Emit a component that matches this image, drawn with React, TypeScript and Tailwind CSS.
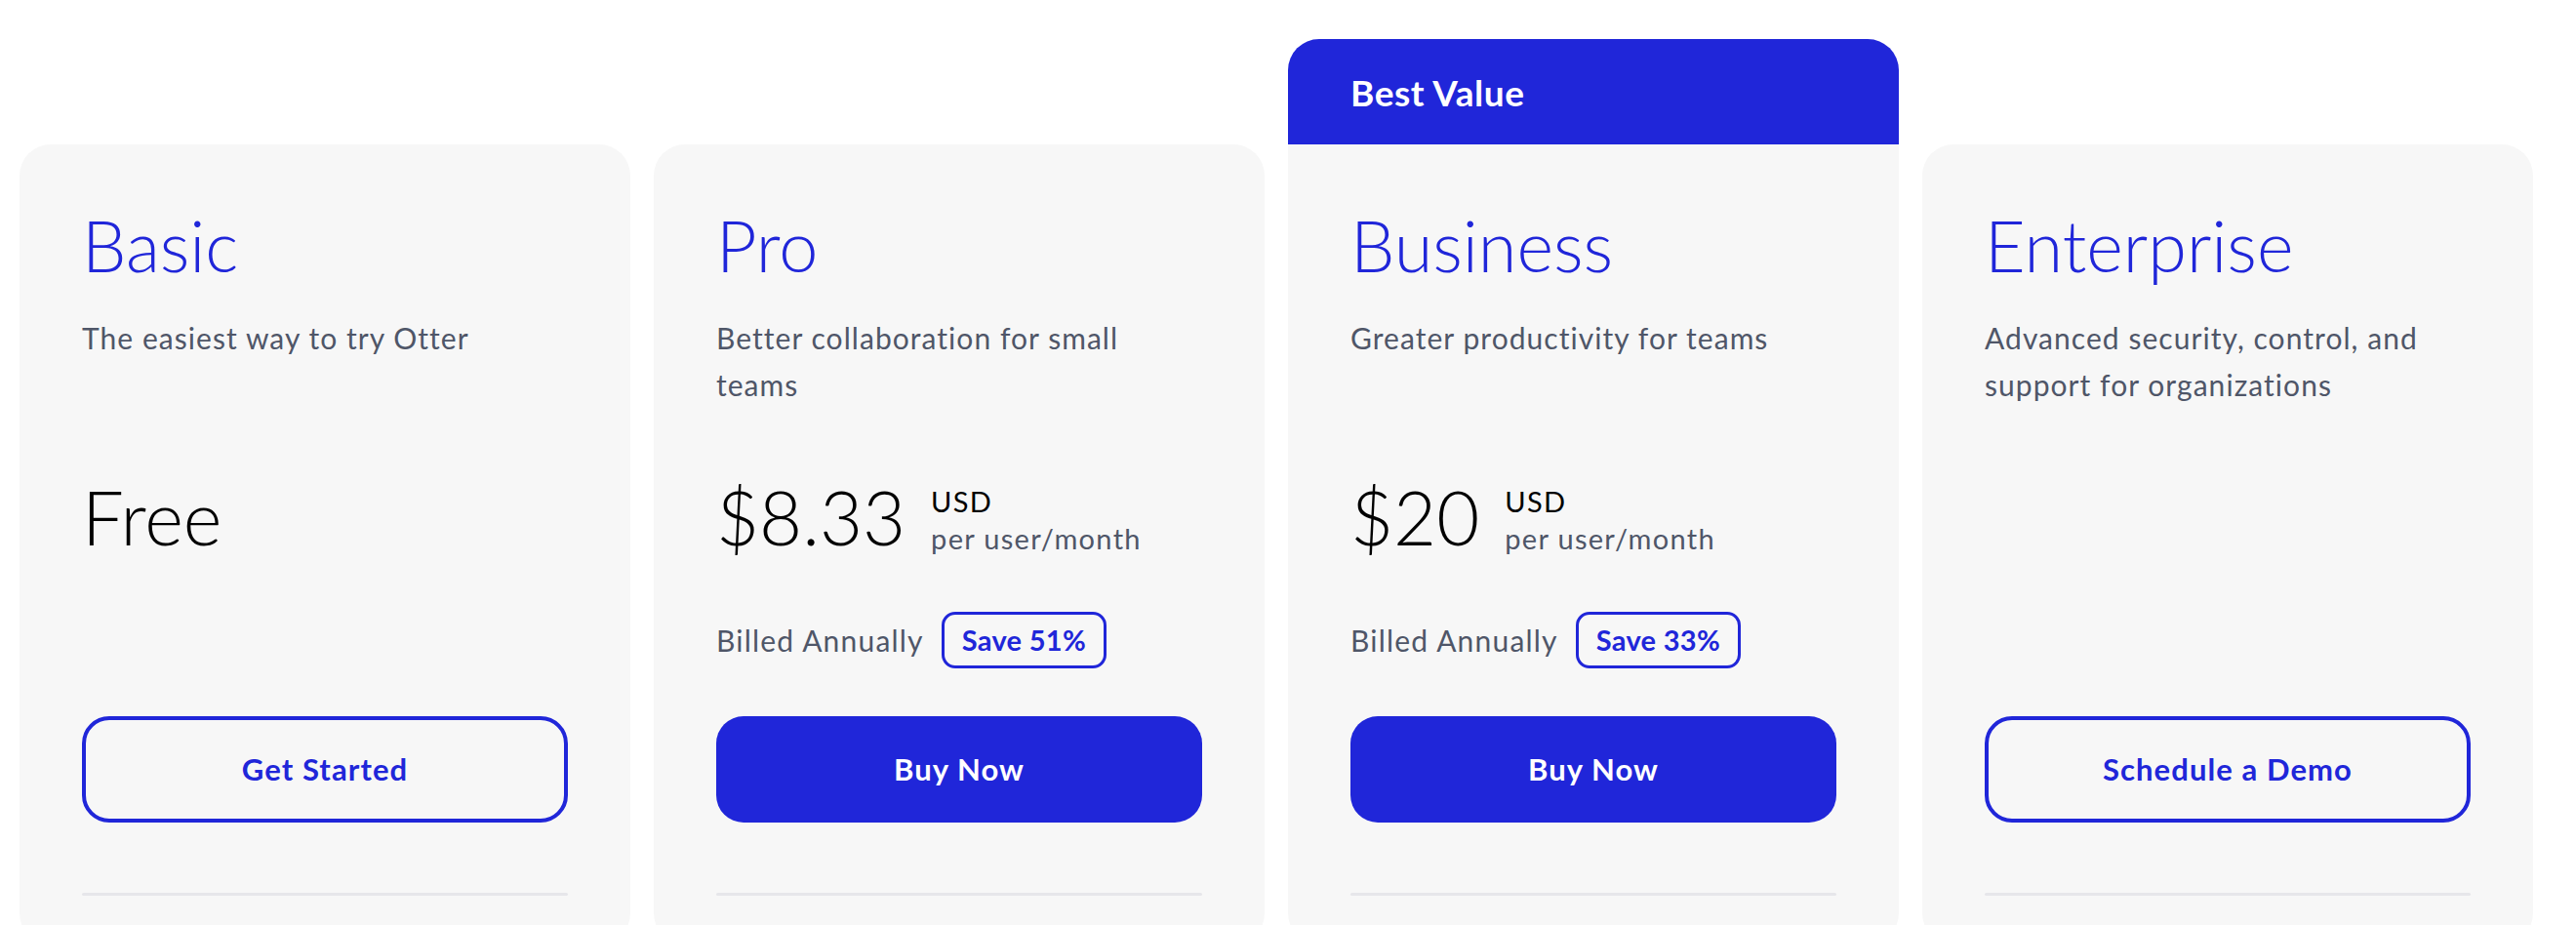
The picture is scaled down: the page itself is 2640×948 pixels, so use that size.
import React from "react";

type Plan = {
  name: string;
  desc: string;
  price?: string;
  free?: boolean;
  save?: string;
  cta: string;
  filled: boolean;
  best?: boolean;
};

const plans: Plan[] = [
  { name: "Basic", desc: "The easiest way to try Otter", free: true, cta: "Get Started", filled: false },
  { name: "Pro", desc: "Better collaboration for small teams", price: "$8.33", save: "Save 51%", cta: "Buy Now", filled: true },
  { name: "Business", desc: "Greater productivity for teams", price: "$20", save: "Save 33%", cta: "Buy Now", filled: true, best: true },
  { name: "Enterprise", desc: "Advanced security, control, and support for organizations", cta: "Schedule a Demo", filled: false },
];

function Card({ p }: { p: Plan }) {
  return (
    <div className="flex w-[626px] flex-col">
      {p.best ? (
        <div className="flex h-[108px] items-center rounded-t-[32px] bg-[#2026d9] px-[64px]">
          <span className="text-[37px] font-bold leading-none tracking-[0.015em] text-white">Best Value</span>
        </div>
      ) : (
        <div className="h-[108px]" />
      )}
      <div
        className={
          "flex h-[820px] flex-col bg-[#f7f7f7] px-[64px] pt-[67px] " +
          (p.best ? "rounded-b-[32px]" : "rounded-[32px]")
        }
      >
        <h2 className="text-[72px] font-light leading-none text-[#2026d9]">{p.name}</h2>
        <p className="mt-[35px] h-[96px] text-[30px] leading-[48px] tracking-[0.035em] text-[#4f5668]">{p.desc}</p>
        <div className="mt-[74px] flex h-[80px] items-start">
          {p.free && <span className="text-[76px] font-light leading-none text-black">Free</span>}
          {p.price && (
            <>
              <span className="text-[76px] font-light leading-none text-black">{p.price}</span>
              <div className="ml-[26px] mt-[3px] flex flex-col text-[29px] leading-[38px] tracking-[0.045em]">
                <span className="text-black">USD</span>
                <span className="text-[#4f5668]">per user/month</span>
              </div>
            </>
          )}
        </div>
        <div className="mt-[55px] flex h-[58px] items-center">
          {p.save && (
            <>
              <span className="text-[30px] tracking-[0.04em] text-[#4f5668]">Billed Annually</span>
              <span className="ml-[18px] flex h-[58px] items-center rounded-[14px] border-[3px] border-[#2026d9] px-[18px] text-[29px] font-bold tracking-[0.01em] text-[#2026d9]">
                {p.save}
              </span>
            </>
          )}
        </div>
        <button
          className={
            "mt-[49px] flex h-[109px] w-full items-center justify-center rounded-[28px] text-[31px] font-bold tracking-[0.035em] " +
            (p.filled
              ? "bg-[#2026d9] text-white"
              : "border-[4px] border-[#2026d9] bg-transparent text-[#2026d9]")
          }
        >
          {p.cta}
        </button>
        <div className="mt-[72px] h-[3px] w-full rounded-full bg-[#e6e6ea]" />
      </div>
    </div>
  );
}

export default function App() {
  return (
    <div
      className="flex h-[948px] w-[2640px] items-start gap-[24px] overflow-hidden bg-white pl-[20px] pt-[40px]"
      style={{ fontFamily: "Lato, 'Noto Sans', sans-serif" }}
    >
      {plans.map((p) => (
        <Card key={p.name} p={p} />
      ))}
    </div>
  );
}
